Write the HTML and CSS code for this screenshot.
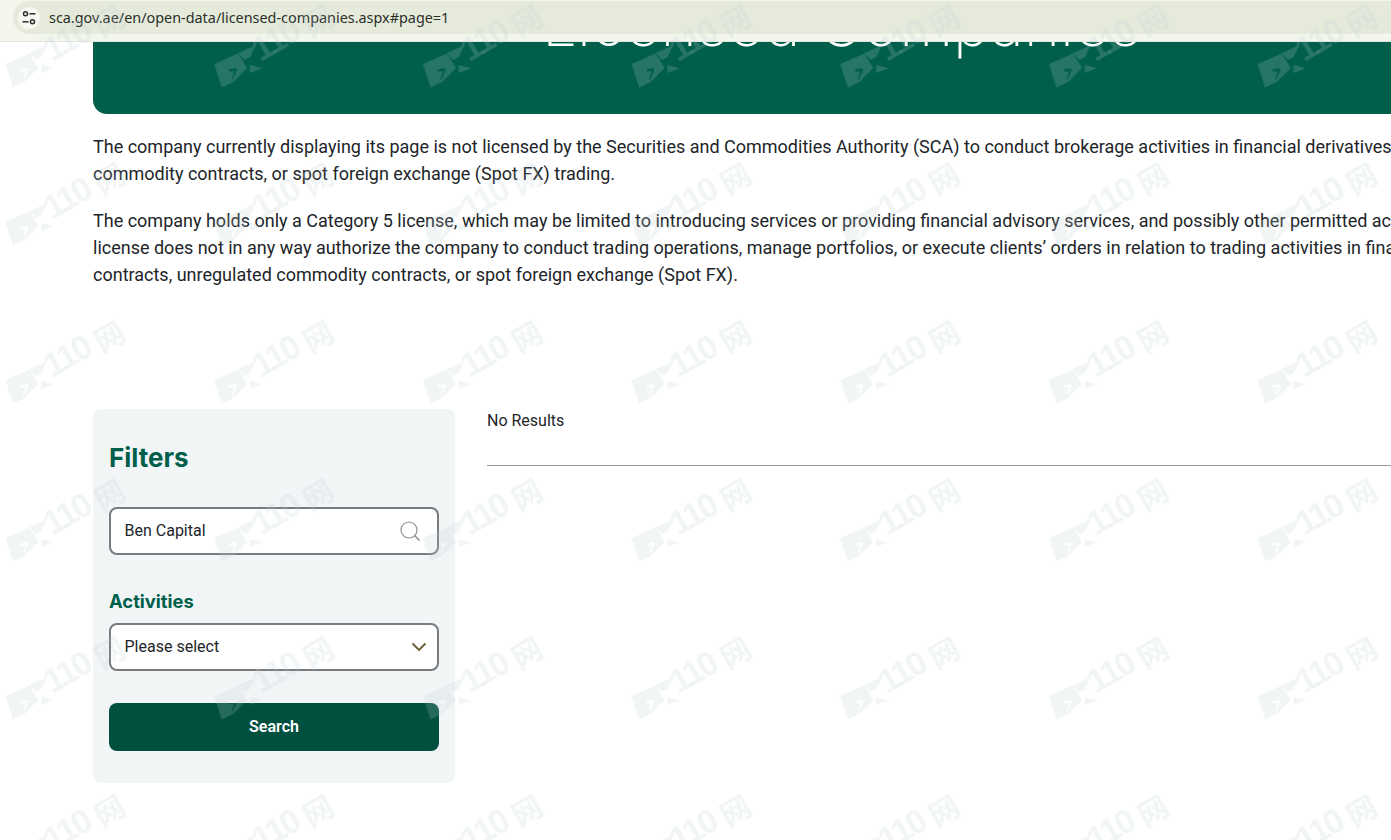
FILE: index.html
```html
<!DOCTYPE html>
<html lang="en">
<head>
    <meta charset="UTF-8">
    <meta name="viewport" content="width=device-width, initial-scale=1.0">
    <title>Licensed Companies</title>
    <link rel="stylesheet" href="styles.css">
</head>
<body>
    <div class="toolbar">
        <div class="url-pill">
            <span class="site-icon">
                <svg width="16" height="16" viewBox="0 0 16 16" fill="none" stroke="#2b2f2a" stroke-width="1.5">
                    <circle cx="4.5" cy="3.8" r="2"/>
                    <path d="M8.5 3.8H14.5"/>
                    <path d="M1.5 11.8H7.5"/>
                    <circle cx="11.5" cy="11.8" r="2"/>
                </svg>
            </span>
            <span class="url-text">sca.gov.ae/en/open-data/licensed-companies.aspx#page=1</span>
        </div>
    </div>

    <div class="container">
        <div class="hero">
            <h1>Licensed Companies</h1>
        </div>

        <div class="notice">
            <p>The company currently displaying its page is not licensed by the Securities and Commodities Authority (SCA) to conduct brokerage activities in financial derivatives, unregulated<br>commodity contracts, or spot foreign exchange (Spot FX) trading.</p>
            <p>The company holds only a Category 5 license, which may be limited to introducing services or providing financial advisory services, and possibly other permitted activities. This<br>license does not in any way authorize the company to conduct trading operations, manage portfolios, or execute clients’ orders in relation to trading activities in financial<br>contracts, unregulated commodity contracts, or spot foreign exchange (Spot FX).</p>
        </div>

        <div class="content">
            <form class="filters">
                <h2>Filters</h2>
                <div class="field">
                    <input type="text" value="Ben Capital">
                    <svg class="search-icon" width="22" height="22" viewBox="0 0 22 22" fill="none" stroke="#8b9096" stroke-width="1.2">
                        <circle cx="10" cy="10" r="8"/>
                        <path d="M15.8 15.8L20.5 20.5" stroke-width="1.6"/>
                    </svg>
                </div>
                <h3>Activities</h3>
                <div class="field">
                    <select>
                        <option>Please select</option>
                    </select>
                    <svg class="chevron" width="16" height="10" viewBox="0 0 16 10" fill="none" stroke="#6a5a36" stroke-width="1.8">
                        <path d="M1.5 1.5L8 8L14.5 1.5"/>
                    </svg>
                </div>
                <button type="button">Search</button>
            </form>

            <div class="results">
                <div class="results-count">No Results</div>
            </div>
        </div>
    </div>

    <!-- watermark over the whole page -->
    <svg class="watermark" width="1391" height="840">
        <defs>
            <pattern id="wm" width="208.7" height="158" patternUnits="userSpaceOnUse">
                <path fill-rule="evenodd" d="M5.5 64L29.6 53.5L38.5 68L24.6 82L13 87.5ZM20 69.5L27 68L28.4 70L23.8 80L23 79L25.6 71.2L21 71.7Z"/>
                <path d="M29.6 53L47.3 45L41.3 57.3L35.6 60Z"/>
                <path d="M41.3 65L53.6 68.3L41.3 73Z"/>
                <text class="wm-num" transform="translate(52 62) rotate(-30)">110</text>
                <text class="wm-cjk" transform="translate(102 38) rotate(-30)">网</text>
            </pattern>
        </defs>
        <rect width="1391" height="840" fill="url(#wm)"/>
    </svg>
</body>
</html>
```

FILE: styles.css
```css
html, body {
    margin: 0;
    height: 840px;
    overflow: hidden;
}
body {
    font-family: Roboto, Arial, sans-serif;
    background: white;
    color: #212529;
}

/* browser address bar */
.toolbar {
    position: relative;
    z-index: 2;
    height: 40px;
    padding: 1px 0 0 13px;
    background: #f3f6ec;
    border-bottom: 1px solid #e3e6dd;
}
.url-pill {
    display: flex;
    align-items: center;
    height: 33px;
    border-radius: 17px 0 0 17px;
    background: #e5eadb;
    padding-left: 5px;
}
.site-icon {
    display: flex;
    align-items: center;
    justify-content: center;
    width: 22px;
    height: 22px;
    border-radius: 50%;
    background: #f6f8f1;
}
.url-text {
    margin-left: 9px;
    font-family: "Noto Sans", sans-serif;
    font-size: 14.4px;
    color: #2b2f2a;
}

.container {
    width: 1497px;
    margin-left: 93px;
}
.hero {
    height: 72px;
    overflow: hidden;
    background: #005f4b;
    border-radius: 0 0 14px 14px;
    text-align: center;
}
.hero h1 {
    margin: -60px 0 0;
    font-family: Inter, sans-serif;
    font-weight: 200;
    font-size: 62px;
    line-height: 84px;
    color: white;
}

.notice {
    padding-top: 19px;
    height: 276px;
    box-sizing: border-box;
    margin-bottom: 19px;
}
.notice p {
    margin: 0 0 20px;
    font-size: 18px;
    line-height: 27px;
    white-space: nowrap;
}

.content {
    display: flex;
    gap: 32px;
}
.filters {
    width: 362px;
    height: 374px;
    box-sizing: border-box;
    padding: 33px 16px 0;
    background: #f2f5f6;
    border-radius: 8px;
}
.filters h2 {
    margin: 0 0 33px;
    font-family: Inter, sans-serif;
    font-weight: 700;
    font-size: 26px;
    line-height: 32px;
    color: #005f4b;
}
.filters h3 {
    margin: 34px 0 10px;
    font-family: Inter, sans-serif;
    font-weight: 700;
    font-size: 18.4px;
    line-height: 24px;
    color: #005f4b;
}
.field {
    position: relative;
}
.field input, .field select {
    display: block;
    width: 100%;
    height: 48px;
    box-sizing: border-box;
    padding: 0 13.5px 2px;
    border: 2px solid #787b7f;
    border-radius: 8px;
    background: white;
    font-family: Roboto, sans-serif;
    font-size: 16px;
    color: #212529;
    appearance: none;
}
.search-icon {
    position: absolute;
    top: 13px;
    right: 18px;
}
.chevron {
    position: absolute;
    top: 19px;
    right: 12px;
}
.filters button {
    display: block;
    width: 100%;
    height: 48px;
    margin-top: 32px;
    padding: 0 0 2px;
    border: none;
    border-radius: 8px;
    background: #005040;
    color: white;
    font-family: Roboto, sans-serif;
    font-size: 16px;
    font-weight: 600;
}

.results {
    flex: 1;
}
.results-count {
    height: 57px;
    box-sizing: border-box;
    border-bottom: 1px solid #999;
    font-size: 16px;
    line-height: 24px;
}

.watermark {
    position: fixed;
    top: 0;
    left: 0;
    z-index: 3;
    pointer-events: none;
    fill: rgba(188, 204, 210, 0.2);
}
.wm-num {
    font-family: "Liberation Sans", sans-serif;
    font-weight: 700;
    font-size: 34px;
    letter-spacing: -2.5px;
}
.wm-cjk {
    font-family: "Noto Sans CJK SC", sans-serif;
    font-weight: 700;
    font-size: 30px;
}
```
